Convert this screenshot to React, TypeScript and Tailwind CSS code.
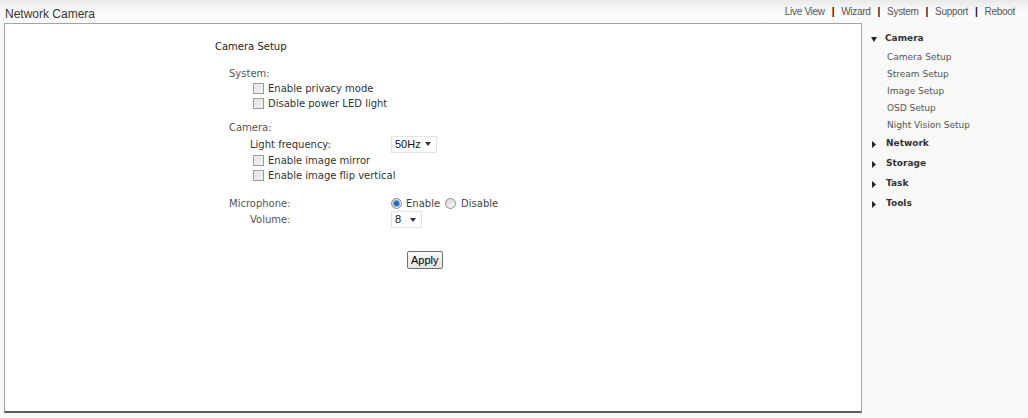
import React from "react";

const Check = () => (
  <span className="inline-block w-[11px] h-[11px] border border-[#9a9a9a] bg-gradient-to-br from-[#dcdcdc] to-[#f7f7f7] shadow-[inset_0_0_0_1px_#f0f0f0]" />
);

const Radio = ({ on }: { on?: boolean }) => (
  <span className="inline-flex items-center justify-center w-[11px] h-[11px] rounded-full border border-[#8e8f8f] bg-gradient-to-br from-[#d8d8d8] to-[#f8f8f8]">
    {on && <span className="w-[5px] h-[5px] rounded-full bg-[#2a6cb8] shadow-[0_0_1px_1px_#6fa3dc]" />}
  </span>
);

const Select = ({ value, w }: { value: string; w: string }) => (
  <div className={`flex items-center justify-between h-[17px] border border-[#e2e2e2] bg-white pl-[3px] pr-[5px] ${w}`}>
    <span className="text-[11px] text-[#111]" style={{ fontFamily: '"Liberation Sans", Arial, sans-serif' }}>{value}</span>
    <svg width="6" height="4" viewBox="0 0 6 4"><path d="M0 0h6L3 4z" fill="#333" /></svg>
  </div>
);

const CheckRow = ({ label }: { label: string }) => (
  <div className="flex items-center h-[15px] pl-[38px] gap-[4px]">
    <Check />
    <span className="text-[#333]">{label}</span>
  </div>
);

const Tri = ({ down }: { down?: boolean }) =>
  down ? (
    <svg width="6" height="5" viewBox="0 0 6 5" className="mr-[8px] ml-[9px]"><path d="M0 0h6L3 5z" fill="#222" /></svg>
  ) : (
    <svg width="4" height="7" viewBox="0 0 4 7" className="mr-[10px] ml-[10px]"><path d="M0 0v7l4-3.5z" fill="#222" /></svg>
  );

export default function App() {
  const links = ["Live View", "Wizard", "System", "Support", "Reboot"];
  return (
    <div className="w-[1028px] h-[418px] bg-[#f8f8f7] relative overflow-hidden" style={{ fontFamily: '"DejaVu Sans", Verdana, sans-serif' }}>
      <div className="h-[23px] flex justify-between bg-gradient-to-b from-[#e9e9e9] via-[#fafafa] to-[#fafafa]">
        <div className="pl-[5px] pt-[5px] text-[12px] text-[#333]" style={{ fontFamily: '"Liberation Sans", Arial, sans-serif' }}>Network Camera</div>
        <div className="flex items-start pr-[13px] pt-[4px] text-[10px] text-[#555] tracking-[-0.3px]" style={{ fontFamily: '"Liberation Sans", Arial, sans-serif' }}>
          {links.map((l, i) => (
            <React.Fragment key={l}>
              {i > 0 && <span className="px-[7px] text-[#111] font-bold">|</span>}
              <span>{l}</span>
            </React.Fragment>
          ))}
        </div>
      </div>
      <div className="flex">
        <div className="ml-[4px] w-[858px] h-[390px] bg-white border border-[#a4a4a4] border-b-2 border-b-[#5c5c5c] pl-[210px] pt-[16px] text-[10px]">
          <div className="h-[14px] leading-[14px] text-[#222]">Camera Setup</div>
          <div className="mt-[13px] h-[14px] leading-[14px] pl-[14px] text-[#555]">System:</div>
          <CheckRow label="Enable privacy mode" />
          <CheckRow label="Disable power LED light" />
          <div className="mt-[10px] h-[14px] leading-[14px] pl-[14px] text-[#555]">Camera:</div>
          <div className="flex items-center h-[18px]">
            <span className="w-[176px] pl-[35px] text-[#333]">Light frequency:</span>
            <Select value="50Hz" w="w-[46px]" />
          </div>
          <CheckRow label="Enable image mirror" />
          <CheckRow label="Enable image flip vertical" />
          <div className="mt-[13px] flex items-center h-[14px]">
            <span className="w-[176px] pl-[14px] text-[#555]">Microphone:</span>
            <Radio on />
            <span className="ml-[4px] text-[#444]">Enable</span>
            <span className="ml-[5px] flex"><Radio /></span>
            <span className="ml-[5px] text-[#444]">Disable</span>
          </div>
          <div className="flex items-center h-[17px] mt-[1px]">
            <span className="w-[176px] pl-[35px] text-[#555]">Volume:</span>
            <Select value="8" w="w-[31px]" />
          </div>
          <div className="mt-[23px] pl-[192px]">
            <button className="h-[18px] px-[3px] border border-[#6f6f6f] rounded-[2px] bg-gradient-to-b from-[#fbfbfb] to-[#e3e3e3] text-[11px] leading-[14px] text-black" style={{ fontFamily: '"Liberation Sans", Arial, sans-serif' }}>Apply</button>
          </div>
        </div>
        <div className="flex-1 pt-[10px] text-[9px] text-[#555]">
          <div className="flex items-center h-[12px] font-bold text-[#333]"><Tri down />Camera</div>
          <div className="pl-[25px] mt-[6px]">
            {["Camera Setup", "Stream Setup", "Image Setup", "OSD Setup", "Night Vision Setup"].map((s) => (
              <div key={s} className="h-[17px] leading-[12px]">{s}</div>
            ))}
          </div>
          {["Network", "Storage", "Task", "Tools"].map((s, i) => (
            <div key={s} className={`flex items-center h-[12px] font-bold text-[#333] ${i === 0 ? "mt-[2px]" : "mt-[8px]"}`}><Tri />{s}</div>
          ))}
        </div>
      </div>
    </div>
  );
}
